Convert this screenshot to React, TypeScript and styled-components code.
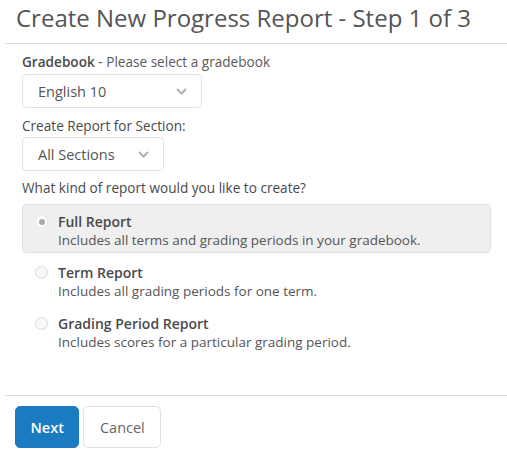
import React from 'react';
import styled, { createGlobalStyle } from 'styled-components';

const GlobalStyle = createGlobalStyle`
  body {
    margin: 0;
    background: #fff;
    font-family: 'Open Sans', 'Liberation Sans', sans-serif;
    color: #555;
  }
`;

const Modal = styled.div`
  width: 507px;
  height: 455px;
  padding-left: 5px;
  box-sizing: border-box;
  overflow: hidden;
`;

const Header = styled.div`
  height: 44px;
  box-sizing: border-box;
  padding: 2px 0 0 11px;
  border-bottom: 1px solid #dcdcdc;
`;

const Title = styled.h2`
  margin: 0;
  font-size: 24px;
  line-height: 32px;
  font-weight: 400;
  color: #555;
`;

const Body = styled.div`
  padding: 9px 16px 0 17px;
  height: 352px;
  box-sizing: border-box;
  border-bottom: 1px solid #dcdcdc;
`;

const Label = styled.div<{ $top: number }>`
  margin-top: ${(p) => p.$top}px;
  font-size: 13.6px;
  line-height: 18px;
  color: #4a4a4a;
  span {
    color: #5a5a5a;
  }
  strong {
    font-weight: 600;
    color: #4a4a4a;
  }
`;

const Select = styled.div<{ $width: number; $top: number }>`
  margin-top: ${(p) => p.$top}px;
  width: ${(p) => p.$width}px;
  height: 34px;
  box-sizing: border-box;
  padding: 0 14px 0 15px;
  display: flex;
  align-items: center;
  justify-content: space-between;
  border: 1px solid #e2e2e2;
  border-radius: 4px;
  font-size: 14.5px;
  color: #555;
  svg {
    color: #b0b0b0;
  }
`;

const Options = styled.div`
  margin-top: 7px;
  display: flex;
  flex-direction: column;
  gap: 2px;
`;

const Option = styled.div<{ $active?: boolean }>`
  height: 49px;
  box-sizing: border-box;
  padding: 7px 0 0 12px;
  display: flex;
  gap: 10px;
  border: 1px solid ${(p) => (p.$active ? '#e2e2e2' : 'transparent')};
  border-radius: 4px;
  background: ${(p) => (p.$active ? '#efefef' : 'transparent')};
`;

const Radio = styled.span<{ $checked?: boolean }>`
  margin-top: 3px;
  width: 13px;
  height: 13px;
  flex: none;
  box-sizing: border-box;
  border-radius: 50%;
  border: 1px solid ${(p) => (p.$checked ? '#e8e8e8' : '#dcdcdc')};
  background: ${(p) => (p.$checked ? '#fff' : '#f8f8f8')};
  display: flex;
  align-items: center;
  justify-content: center;
  &::after {
    content: '';
    width: 6px;
    height: 6px;
    border-radius: 50%;
    background: ${(p) => (p.$checked ? '#a9a9a9' : 'transparent')};
  }
`;

const OptionText = styled.div`
  font-size: 13.5px;
  line-height: 19px;
  color: #555;
  strong {
    display: block;
    font-size: 14px;
    font-weight: 600;
    color: #4a4a4a;
  }
`;

const Footer = styled.div`
  padding: 10px 0 0 10px;
  display: flex;
  gap: 4px;
`;

const Button = styled.button<{ $primary?: boolean }>`
  height: 42px;
  box-sizing: border-box;
  padding: 0 ${(p) => (p.$primary ? '14.5px' : '15.5px')};
  border-radius: 5px;
  font-family: inherit;
  font-size: 14.5px;
  font-weight: ${(p) => (p.$primary ? 600 : 400)};
  color: ${(p) => (p.$primary ? '#fff' : '#666')};
  background: ${(p) => (p.$primary ? '#1a7bc0' : '#fff')};
  border: 1px solid ${(p) => (p.$primary ? '#1a7bc0' : '#e0e0e0')};
`;

const Chevron = () => (
  <svg width="11" height="7" viewBox="0 0 11 7" fill="none">
    <path d="M1 1l4.5 4.5L10 1" stroke="currentColor" strokeWidth="2" />
  </svg>
);

const options = [
  { title: 'Full Report', desc: 'Includes all terms and grading periods in your gradebook.', active: true },
  { title: 'Term Report', desc: 'Includes all grading periods for one term.' },
  { title: 'Grading Period Report', desc: 'Includes scores for a particular grading period.' },
];

export default function App() {
  return (
    <>
      <GlobalStyle />
      <Modal>
        <Header>
          <Title>Create New Progress Report - Step 1 of 3</Title>
        </Header>
        <Body>
          <Label $top={0}>
            <strong>Gradebook</strong>
            <span> - Please select a gradebook</span>
          </Label>
          <Select $width={180} $top={3}>
            <span>English 10</span>
            <Chevron />
          </Select>
          <Label $top={9}>Create Report for Section:</Label>
          <Select $width={142} $top={2}>
            <span>All Sections</span>
            <Chevron />
          </Select>
          <Label $top={8}>What kind of report would you like to create?</Label>
          <Options>
            {options.map((o) => (
              <Option key={o.title} $active={o.active}>
                <Radio $checked={o.active} />
                <OptionText>
                  <strong>{o.title}</strong>
                  {o.desc}
                </OptionText>
              </Option>
            ))}
          </Options>
        </Body>
        <Footer>
          <Button $primary>Next</Button>
          <Button>Cancel</Button>
        </Footer>
      </Modal>
    </>
  );
}
